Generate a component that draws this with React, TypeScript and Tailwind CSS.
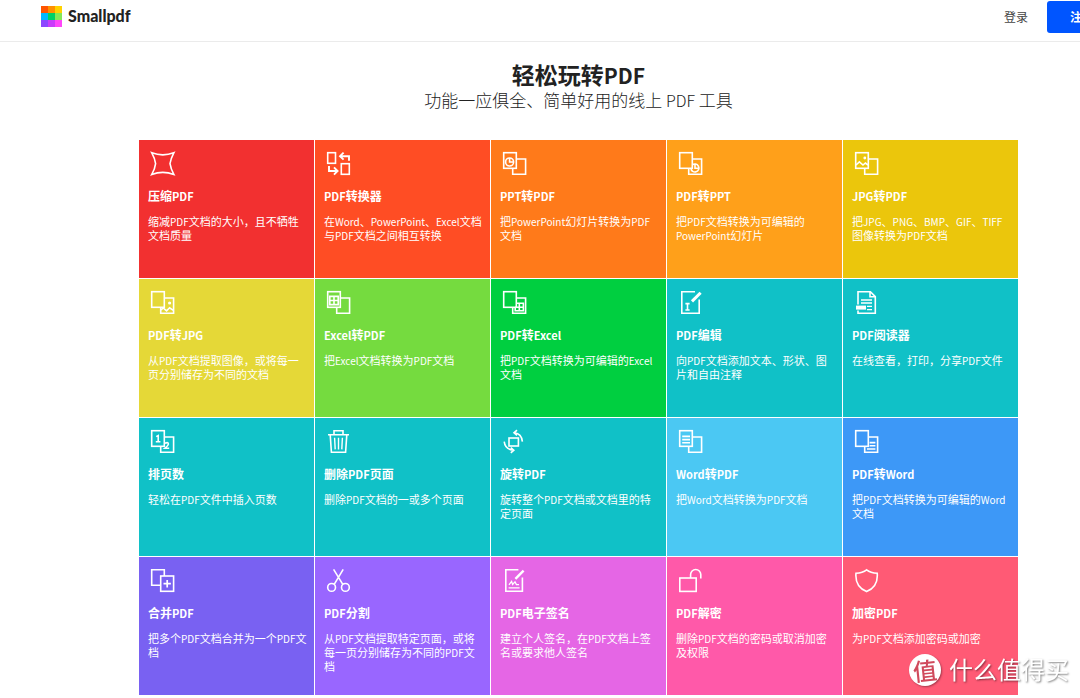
import type { ReactNode } from "react";

const FRONT = <rect x="1.7" y="1.7" width="12.6" height="15.6" />;
const BEHIND_RIGHT = <path d="M14.3 8H23.6V23.3H10.7V17.3" />;

const icons: Record<string, ReactNode> = {
  compress: <path d="M1.8 1.8Q12.8 6 23.8 1.8Q20.8 7.6 20 12.6Q20.8 17.6 23.8 23.4Q12.8 19.4 1.8 23.4Q5 17.6 5.6 12.6Q5 7.6 1.8 1.8Z" />,
  convert: (
    <>
      <rect x="1.7" y="1.7" width="7.8" height="10.6" />
      <rect x="15.3" y="12.7" width="8" height="10.6" />
      <path d="M23 9.8V5.2H14.4M17.6 1.6L14 5.2L17.6 8.6" strokeWidth="1.9" />
      <path d="M3 15V20H11M8 16.4L11.6 20L8 23.6" strokeWidth="1.9" />
    </>
  ),
  pptToPdf: (
    <>
      {FRONT}
      {BEHIND_RIGHT}
      <circle cx="7.6" cy="11" r="4" />
      <path d="M7.6 7V11H11.6" />
    </>
  ),
  pdfToPpt: (
    <>
      {FRONT}
      {BEHIND_RIGHT}
      <path d="M14.3 13.9A4 4 0 1 1 12.9 17.4M17 13.4V17.3H21" />
    </>
  ),
  jpgToPdf: (
    <>
      {FRONT}
      {BEHIND_RIGHT}
      <path d="M2 14L5.4 10.8L9 14L11.4 12L14 14" />
      <circle cx="10.8" cy="7" r="1.4" fill="currentColor" stroke="none" />
    </>
  ),
  pdfToJpg: (
    <>
      {FRONT}
      {BEHIND_RIGHT}
      <path d="M11 20L13.2 18L16.6 20.8L19.6 17.8L23.4 20.4" />
      <circle cx="19.6" cy="13" r="1.6" fill="currentColor" stroke="none" />
    </>
  ),
  excelToPdf: (
    <>
      {FRONT}
      {BEHIND_RIGHT}
      <path d="M3.8 6.4H12.2V14.6H3.8ZM8 6.4V14.6M3.8 10.5H12.2" />
    </>
  ),
  pdfToExcel: (
    <>
      {FRONT}
      {BEHIND_RIGHT}
      <path d="M14.3 13.2H21.4V20.8H13.2V17.3M17.3 13.2V20.8M13.2 17.2H21.4" />
    </>
  ),
  edit: (
    <>
      <path d="M17 1.8H3.8V23.3H21.2V9.4" />
      <path d="M14 11.4L22.6 2.8" strokeWidth="3" />
      <path d="M7.4 13.6H11.6M9.5 13.6V20M7.4 20H11.6" />
    </>
  ),
  reader: (
    <>
      <path d="M4 14.6V1.7H16.4L21.3 6.6V23.3H4V20.4M16 1.9V6.8H21.1" />
      <path d="M7 10H18M7 13H18M13 16.4H18M13 19.6H18" strokeWidth="1.3" />
      <rect x="2" y="15.6" width="10" height="4" fill="currentColor" stroke="none" />
    </>
  ),
  number: (
    <>
      {FRONT}
      {BEHIND_RIGHT}
      <path d="M6.2 7.6L8.2 6.6V12.8M5.8 12.8H10.4" />
      <path d="M15 14.2Q18.6 12.6 18.4 15.2Q18 17 15 19.2H19.2" />
    </>
  ),
  trash: (
    <>
      <path d="M2 5.8H23M4.2 5.8L5.4 23.3H19.6L20.8 5.8M8 5.6V1.7H17V5.6" />
      <path d="M8.6 8.8L9.2 20.4M12.5 8.8V20.4M16.4 8.8L15.8 20.4" strokeWidth="1.4" />
    </>
  ),
  rotate: (
    <>
      <rect x="7" y="9" width="9.4" height="8" />
      <path d="M12.4 3.8Q19.6 4.6 20.4 12.6M15 1.2L12 3.8L15 6.4" />
      <path d="M2.2 12.6Q3.2 20.4 11.4 21.2M8.8 18.6L11.8 21.2L8.8 23.8" />
    </>
  ),
  wordToPdf: (
    <>
      {FRONT}
      {BEHIND_RIGHT}
      <path d="M4.2 7.4H12M4.2 10.6H12M4.2 13.8H12" />
    </>
  ),
  pdfToWord: (
    <>
      {FRONT}
      {BEHIND_RIGHT}
      <path d="M15.6 13.6H21.4M15.6 16.8H21.4M13 20H21.4" />
    </>
  ),
  merge: (
    <>
      <path d="M10.7 17.3H1.7V1.7H14.3V8" />
      <rect x="10.7" y="8" width="12.9" height="15.3" />
      <path d="M17.2 12V19.4M13.5 15.7H20.9" strokeWidth="1.7" />
    </>
  ),
  split: (
    <>
      <path d="M7.6 1.4L16.8 16.4M17.2 1.4L8.2 16.4" />
      <circle cx="5.6" cy="19.4" r="3.9" />
      <circle cx="19.4" cy="19.4" r="3.9" />
    </>
  ),
  sign: (
    <>
      <path d="M16.4 1.8H3.8V23.3H20.4V9.6" />
      <path d="M13.4 10.8L21.6 2.6" strokeWidth="2.4" />
      <path d="M7 16.8L9.6 13.4L10.6 16.4L13 13.8L14.4 16.6H17M6.6 19.8H17.6" strokeWidth="1.3" />
    </>
  ),
  unlock: (
    <>
      <rect x="1.8" y="10" width="16.4" height="13.4" />
      <path d="M12.6 10V6.6A5 5 0 0 1 22.8 6.6V10.6" />
    </>
  ),
  protect: <path d="M12.6 1.8C15.4 4 19 5 23.2 5.2C24 13.6 20.2 20.4 12.6 23.6C5 20.4 1.2 13.6 2 5.2C6.2 5 9.8 4 12.6 1.8Z" />,
};

const tools = [
  { icon: "compress", bg: "bg-[#f23030]", title: "压缩PDF", text: "缩减PDF文档的大小，且不牺牲文档质量" },
  { icon: "convert", bg: "bg-[#ff4d24]", title: "PDF转换器", text: "在Word、PowerPoint、Excel文档与PDF文档之间相互转换" },
  { icon: "pptToPdf", bg: "bg-[#ff7a1a]", title: "PPT转PDF", text: "把PowerPoint幻灯片转换为PDF文档" },
  { icon: "pdfToPpt", bg: "bg-[#ffa01a]", title: "PDF转PPT", text: "把PDF文档转换为可编辑的PowerPoint幻灯片" },
  { icon: "jpgToPdf", bg: "bg-[#ebc60c]", title: "JPG转PDF", text: "把JPG、PNG、BMP、GIF、TIFF图像转换为PDF文档" },
  { icon: "pdfToJpg", bg: "bg-[#e5d837]", title: "PDF转JPG", text: "从PDF文档提取图像，或将每一页分别储存为不同的文档" },
  { icon: "excelToPdf", bg: "bg-[#75db3f]", title: "Excel转PDF", text: "把Excel文档转换为PDF文档" },
  { icon: "pdfToExcel", bg: "bg-[#00cf40]", title: "PDF转Excel", text: "把PDF文档转换为可编辑的Excel文档" },
  { icon: "edit", bg: "bg-[#10c1c7]", title: "PDF编辑", text: "向PDF文档添加文本、形状、图片和自由注释" },
  { icon: "reader", bg: "bg-[#10c1c7]", title: "PDF阅读器", text: "在线查看，打印，分享PDF文件" },
  { icon: "number", bg: "bg-[#10c1c7]", title: "排页数", text: "轻松在PDF文件中插入页数" },
  { icon: "trash", bg: "bg-[#10c1c7]", title: "删除PDF页面", text: "删除PDF文档的一或多个页面" },
  { icon: "rotate", bg: "bg-[#10c1c7]", title: "旋转PDF", text: "旋转整个PDF文档或文档里的特定页面" },
  { icon: "wordToPdf", bg: "bg-[#4bc8f3]", title: "Word转PDF", text: "把Word文档转换为PDF文档" },
  { icon: "pdfToWord", bg: "bg-[#3d98f7]", title: "PDF转Word", text: "把PDF文档转换为可编辑的Word文档" },
  { icon: "merge", bg: "bg-[#7961f2]", title: "合并PDF", text: "把多个PDF文档合并为一个PDF文档" },
  { icon: "split", bg: "bg-[#9966ff]", title: "PDF分割", text: "从PDF文档提取特定页面，或将每一页分别储存为不同的PDF文档" },
  { icon: "sign", bg: "bg-[#e566e5]", title: "PDF电子签名", text: "建立个人签名，在PDF文档上签名或要求他人签名" },
  { icon: "unlock", bg: "bg-[#ff59a9]", title: "PDF解密", text: "删除PDF文档的密码或取消加密及权限" },
  { icon: "protect", bg: "bg-[#ff5a75]", title: "加密PDF", text: "为PDF文档添加密码或加密" },
];

// Latin words are set one size below the Chinese text around them
function Mixed({ text, latin }: { text: string; latin: string }) {
  return text.split(/([A-Za-z]+)/).map((part, i) =>
    i % 2 ? <span key={i} className={`${latin} leading-none`}>{part}</span> : part
  );
}

function Logo() {
  return (
    <svg viewBox="0 0 21 21" className="w-[21px] h-[21px]" shapeRendering="crispEdges" aria-hidden="true">
      <rect width="7" height="7" fill="#ff5500" />
      <rect x="7" width="7" height="7" fill="#ff9100" />
      <rect x="14" width="7" height="7" fill="#ffd200" />
      <rect y="7" width="7" height="7" fill="#00b8ff" />
      <rect x="7" y="7" width="7" height="7" fill="#00d166" />
      <rect x="14" y="7" width="7" height="7" fill="#85e857" />
      <rect y="14" width="7" height="7" fill="#8c46ff" />
      <rect x="7" y="14" width="7" height="7" fill="#c83cfa" />
      <rect x="14" y="14" width="7" height="7" fill="#ff46f8" />
    </svg>
  );
}

export default function App() {
  return (
    <div className="min-h-screen overflow-hidden bg-white font-['Noto_Sans_CJK_SC',sans-serif] text-[#222]">
      <div className="min-w-[1157px]">
        <header className="flex items-center justify-between px-10 pt-px pb-2 border-b border-[#ebebeb]">
          <a href="#" className="flex items-center gap-1.5 ml-px pb-0.5">
            <Logo />
            <span className="font-['Lato',sans-serif] font-black text-base leading-5">Smallpdf</span>
          </a>
          <nav className="flex items-center gap-[19px] text-xs">
            <a href="#" className="text-[#444]">登录</a>
            <button className="h-8 w-[70px] rounded-[3px] bg-[#0055ff] text-white font-bold">注册</button>
          </nav>
        </header>

        <main className="pb-[3px]">
          <div className="pt-[18px] text-center">
            <h1 className="text-[23px] leading-7 font-bold">
              <Mixed text="轻松玩转PDF" latin="text-[21px]" />
            </h1>
            <p className="text-[17px] leading-6 font-light">
              <Mixed text="功能一应俱全、简单好用的线上 PDF 工具" latin="text-[16px]" />
            </p>
          </div>

          <div className="grid grid-cols-5 gap-px max-w-[879px] mx-auto mt-7">
            {tools.map(tool => (
              <a
                key={tool.title}
                href="#"
                className={`${tool.bg} min-h-[138px] pt-[11px] pl-[9px] pr-1.5 text-white`}
              >
                <svg
                  viewBox="0 0 26 26"
                  className="w-[26px] h-[26px] ml-0.5"
                  fill="none"
                  stroke="currentColor"
                  strokeWidth="1.6"
                  aria-hidden="true"
                >
                  {icons[tool.icon]}
                </svg>
                <h2 className="mt-[11px] text-xs leading-4 font-bold">
                  <Mixed text={tool.title} latin="text-[11px]" />
                </h2>
                <p className="mt-2.5 text-[11px] leading-[14px]">
                  <Mixed text={tool.text} latin="text-[10px]" />
                </p>
              </a>
            ))}
          </div>
        </main>
      </div>

      <div className="fixed right-[11px] bottom-[11px] flex items-center gap-2 text-white">
        <span className="flex items-center justify-center size-8 rounded-full bg-white text-[#d04a5c] text-2xl leading-8 font-medium shadow-[1px_1px_2px_rgba(0,0,0,0.35)]">
          <span className="-rotate-6">值</span>
        </span>
        <span className="pb-0.5 text-2xl leading-8 [text-shadow:1px_1px_2px_rgba(0,0,0,0.5)]">什么值得买</span>
      </div>
    </div>
  );
}
